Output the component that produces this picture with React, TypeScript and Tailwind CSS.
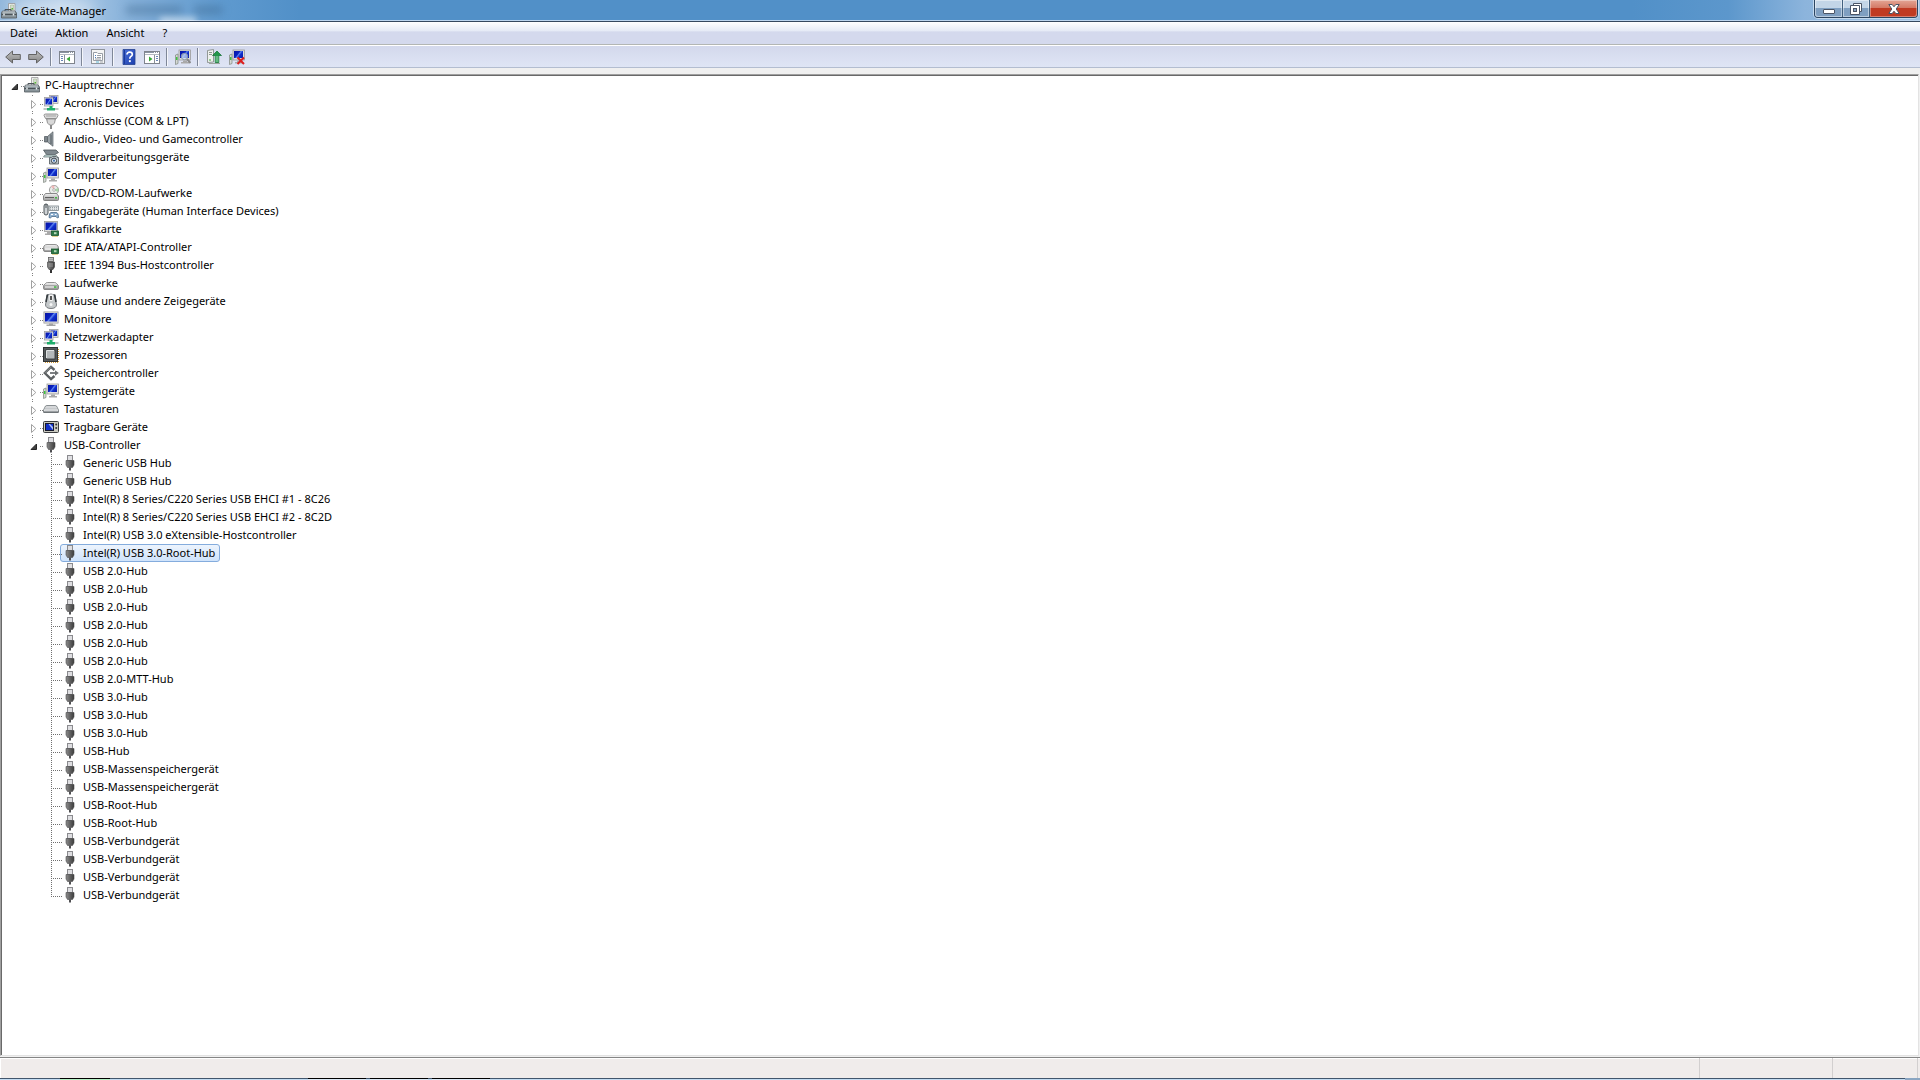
import { useState, type ReactNode } from "react";
import clsx from "clsx";

type IconName =
  | "root"
  | "network"
  | "port"
  | "audio"
  | "imaging"
  | "computer"
  | "dvd"
  | "hid"
  | "display"
  | "ide"
  | "firewire"
  | "drive"
  | "mouse"
  | "monitor"
  | "cpu"
  | "storage"
  | "keyboard"
  | "portable"
  | "usb";

interface Device {
  label: string;
  icon: IconName;
  children?: Device[];
}

const usb = (label: string): Device => ({ label, icon: "usb" });

const categories: Device[] = [
  { label: "Acronis Devices", icon: "network", children: [] },
  { label: "Anschlüsse (COM & LPT)", icon: "port", children: [] },
  { label: "Audio-, Video- und Gamecontroller", icon: "audio", children: [] },
  { label: "Bildverarbeitungsgeräte", icon: "imaging", children: [] },
  { label: "Computer", icon: "computer", children: [] },
  { label: "DVD/CD-ROM-Laufwerke", icon: "dvd", children: [] },
  { label: "Eingabegeräte (Human Interface Devices)", icon: "hid", children: [] },
  { label: "Grafikkarte", icon: "display", children: [] },
  { label: "IDE ATA/ATAPI-Controller", icon: "ide", children: [] },
  { label: "IEEE 1394 Bus-Hostcontroller", icon: "firewire", children: [] },
  { label: "Laufwerke", icon: "drive", children: [] },
  { label: "Mäuse und andere Zeigegeräte", icon: "mouse", children: [] },
  { label: "Monitore", icon: "monitor", children: [] },
  { label: "Netzwerkadapter", icon: "network", children: [] },
  { label: "Prozessoren", icon: "cpu", children: [] },
  { label: "Speichercontroller", icon: "storage", children: [] },
  { label: "Systemgeräte", icon: "computer", children: [] },
  { label: "Tastaturen", icon: "keyboard", children: [] },
  { label: "Tragbare Geräte", icon: "portable", children: [] },
  {
    label: "USB-Controller",
    icon: "usb",
    children: [
      usb("Generic USB Hub"),
      usb("Generic USB Hub"),
      usb("Intel(R) 8 Series/C220 Series USB EHCI #1 - 8C26"),
      usb("Intel(R) 8 Series/C220 Series USB EHCI #2 - 8C2D"),
      usb("Intel(R) USB 3.0 eXtensible-Hostcontroller"),
      usb("Intel(R) USB 3.0-Root-Hub"),
      usb("USB 2.0-Hub"),
      usb("USB 2.0-Hub"),
      usb("USB 2.0-Hub"),
      usb("USB 2.0-Hub"),
      usb("USB 2.0-Hub"),
      usb("USB 2.0-Hub"),
      usb("USB 2.0-MTT-Hub"),
      usb("USB 3.0-Hub"),
      usb("USB 3.0-Hub"),
      usb("USB 3.0-Hub"),
      usb("USB-Hub"),
      usb("USB-Massenspeichergerät"),
      usb("USB-Massenspeichergerät"),
      usb("USB-Root-Hub"),
      usb("USB-Root-Hub"),
      usb("USB-Verbundgerät"),
      usb("USB-Verbundgerät"),
      usb("USB-Verbundgerät"),
      usb("USB-Verbundgerät"),
    ],
  },
];

// gradients shared by all icons
function IconDefs() {
  return (
    <svg className="absolute size-0" aria-hidden="true">
      <defs>
        <linearGradient id="screen" x1="0" y1="0" x2="1" y2="0.6">
          <stop offset="0" stopColor="#0714a0" />
          <stop offset="0.5" stopColor="#0a22c4" />
          <stop offset="0.6" stopColor="#5f86ee" />
          <stop offset="0.75" stopColor="#1030d0" />
          <stop offset="1" stopColor="#0c22b4" />
        </linearGradient>
        <linearGradient id="metal" x1="0" y1="0" x2="0" y2="1">
          <stop offset="0" stopColor="#f4f4f4" />
          <stop offset="1" stopColor="#9a9a9a" />
        </linearGradient>
        <linearGradient id="plug" x1="0" y1="0" x2="1" y2="0">
          <stop offset="0" stopColor="#8d8d8d" />
          <stop offset="0.4" stopColor="#6a6a6a" />
          <stop offset="1" stopColor="#3c3c3c" />
        </linearGradient>
        <linearGradient id="arrow" x1="0" y1="0" x2="0" y2="1">
          <stop offset="0" stopColor="#bdbdbd" />
          <stop offset="1" stopColor="#868686" />
        </linearGradient>
        <linearGradient id="help" x1="0" y1="0" x2="1" y2="1">
          <stop offset="0" stopColor="#4a6fd8" />
          <stop offset="1" stopColor="#1c3fae" />
        </linearGradient>
      </defs>
    </svg>
  );
}

const pc = (
  <>
    <path d="M0.5 6 L3 5 V14.5 L0.5 15.5 Z" fill="#d5d9d5" stroke="#7d857d" strokeWidth="0.7" />
    <path d="M1 8 h1.5 v3 h-1.5 Z" fill="#3fc33f" />
    <rect x="4" y="1" width="11.5" height="10" fill="#dedede" stroke="#9b9b9b" strokeWidth="0.8" />
    <rect x="5" y="2" width="9" height="7" fill="url(#screen)" />
    <path d="M8 11.5 h4 v1.5 h2 v1.5 h-8 v-1.5 h2 Z" fill="#a9a9a9" />
  </>
);

const card = (
  <>
    <rect x="8.5" y="10" width="7" height="4.5" fill="#2f7a48" stroke="#15532a" strokeWidth="0.8" />
    <rect x="11" y="11.2" width="2.5" height="2" fill="#b8d8b8" />
    <path d="M9.5 15.5 h5" stroke="#c9a227" strokeDasharray="1 1" />
  </>
);

const icons: Record<IconName, ReactNode> = {
  root: (
    <>
      <path d="M7.5 0.5 H14 V9 H7.5 Z" fill="#efefef" stroke="#979797" strokeWidth="0.8" />
      <path d="M9.5 2 h3 v5 h-3 Z" fill="#d2dccb" stroke="#9ab088" strokeWidth="0.5" />
      <path d="M10.5 5 h1.5 v1.5 h-1.5 Z" fill="#58b53a" />
      <path d="M4 8 V6.5 H10 V8" fill="none" stroke="#4d5459" />
      <path d="M1.5 8 H14 L15.5 10 V15 H0.5 V10 Z" fill="#8a959b" stroke="#50585d" strokeWidth="0.8" />
      <path d="M1.5 9 H14" stroke="#d0d7db" />
      <path d="M0.5 11.5 H15.5" stroke="#4a5257" />
      <path d="M3 10.5 v2 M12.5 10.5 v2" stroke="#e8ecee" strokeWidth="1.5" />
    </>
  ),
  network: (
    <>
      <rect x="6.5" y="0.5" width="8.5" height="8" fill="#dedede" stroke="#a0a0a0" strokeWidth="0.8" />
      <rect x="7.5" y="1.5" width="6.5" height="5.5" fill="url(#screen)" />
      <rect x="1.5" y="2.5" width="8.5" height="8.5" fill="#e6e6e6" stroke="#a0a0a0" strokeWidth="0.8" />
      <rect x="2.5" y="3.5" width="6.5" height="6" fill="url(#screen)" />
      <path d="M0.5 14 H15.5" stroke="#a9b4b0" strokeWidth="1.5" />
      <path d="M6.5 11 h3 v2 h2.5 v2.5 h-8 v-2.5 h2.5 Z" fill="#1fae6b" />
    </>
  ),
  port: (
    <>
      <path d="M1 2.5 Q1 1 2.5 1 H13.5 Q15 1 15 2.5 L13.5 5.5 H2.5 Z" fill="#dcdcdc" stroke="#7f7f7f" strokeWidth="0.8" />
      <path d="M3.5 3 h9" stroke="#6b6b6b" strokeDasharray="1 1" />
      <path d="M3.5 6 H12.5 L11.5 10 L9.5 12 H6.5 L4.5 10 Z" fill="#c9c9c9" stroke="#858585" strokeWidth="0.8" />
      <path d="M6 6.5 v4 M8 6.5 v5 M10 6.5 v4" stroke="#f5f5f5" strokeWidth="0.7" />
      <path d="M8 12 V16" stroke="#8a8a8a" strokeWidth="2" />
    </>
  ),
  audio: (
    <>
      <path d="M1.5 5.5 H4.5 V11 H1.5 Z" fill="#7c858b" stroke="#4a5257" strokeWidth="0.7" />
      <path d="M4.5 5.5 L10 0.8 V15.2 L4.5 11 Z" fill="#9aa3a8" stroke="#5a6267" strokeWidth="0.8" />
      <path d="M8 3.5 V13" stroke="#4d555a" />
      <path d="M10.5 1 V15" stroke="#c5c9cc" />
    </>
  ),
  imaging: (
    <>
      <path d="M0.5 1 H13 L15.5 3.5 L12 5.5 H3.5 Z" fill="#7f898f" stroke="#4e575c" strokeWidth="0.8" />
      <path d="M2 6 H13 L14.5 8 H0.5 Z" fill="#c6dcd8" stroke="#6e7e80" strokeWidth="0.8" />
      <path d="M6.5 8.5 H8.5 L9.5 7.5 H13 L14 8.5 H15.5 V15 H6.5 Z" fill="#b9c2c7" stroke="#50585d" strokeWidth="0.8" />
      <circle cx="11" cy="11.7" r="2.6" fill="#e5eef5" stroke="#39434a" />
      <circle cx="11" cy="11.7" r="1.1" fill="#3d6ba8" />
    </>
  ),
  computer: pc,
  dvd: (
    <>
      <circle cx="11" cy="5" r="4.6" fill="#e9ece9" stroke="#8c8c8c" strokeWidth="0.8" />
      <path d="M11 5 L8 1.5 A4.6 4.6 0 0 1 11.5 0.5 Z" fill="#f0b8b8" />
      <path d="M11 5 L15 3 A4.6 4.6 0 0 1 15 7 Z" fill="#a8d7a8" />
      <circle cx="11" cy="5" r="1.3" fill="#fff" stroke="#888" strokeWidth="0.6" />
      <path d="M2.5 8.5 H13.5 L15.5 11 V14.5 Q15.5 15.5 14.5 15.5 H1.5 Q0.5 15.5 0.5 14.5 V11 Z" fill="url(#metal)" stroke="#6f6f6f" strokeWidth="0.8" />
      <path d="M2 12.5 H11" stroke="#5f5f5f" />
      <rect x="12" y="12" width="2" height="1.5" fill="#43b843" />
    </>
  ),
  hid: (
    <>
      <path d="M1 3 Q1 1 3 1 Q5 1 5 3 V10 Q5 12 3 12 Q1 12 1 10 Z" fill="#cfd3d6" stroke="#4d5459" />
      <path d="M3 1 V5" stroke="#4d5459" />
      <rect x="6" y="3" width="9.5" height="4.5" fill="#e3e6e8" stroke="#7c858a" strokeWidth="0.8" />
      <path d="M7 4.5 h8 M7 6.2 h8" stroke="#8b9499" strokeWidth="0.9" strokeDasharray="1 1" />
      <path d="M6 14.5 Q6 9.5 8 9.5 H13 Q15.5 9.5 15.5 14.5 Q14.5 16 13 13.5 H9 Q7 16 6 14.5 Z" fill="#8fb0cf" stroke="#4a6a88" strokeWidth="0.8" />
      <path d="M8 11.5 h2 M12 11.5 h1.5" stroke="#fff" />
    </>
  ),
  display: (
    <>
      <rect x="1.5" y="0.5" width="13" height="10" fill="#dedede" stroke="#9b9b9b" strokeWidth="0.8" />
      <rect x="2.5" y="1.5" width="11" height="7.5" fill="url(#screen)" />
      <path d="M4 11 h4 v3 h-6 v-1.5 h2 Z" fill="#a9a9a9" />
      {card}
    </>
  ),
  ide: (
    <>
      <path d="M1 7 Q2 5.5 4 5.5 H12 Q14 5.5 15 7 L15.5 9 V11 Q15.5 12.5 14 12.5 H2 Q0.5 12.5 0.5 11 V9 Z" fill="url(#metal)" stroke="#777" strokeWidth="0.8" />
      <path d="M2 8.5 H14 V11 H2 Z" fill="#e4e4e4" />
      {card}
    </>
  ),
  firewire: (
    <>
      <rect x="5.5" y="0.5" width="5" height="4" fill="#d8d8d8" stroke="#5c5c5c" strokeWidth="0.8" />
      <path d="M7 1.5 v2 M9 1.5 v2" stroke="#555" strokeWidth="0.8" />
      <path d="M4.5 5 H11.5 V10 L10 12.5 H6 L4.5 10 Z" fill="url(#plug)" stroke="#3a3a3a" strokeWidth="0.6" />
      <path d="M6 7 h4 M6 9 h4" stroke="#b5b5b5" strokeWidth="0.7" />
      <path d="M8 12.5 V16" stroke="#333" strokeWidth="2" />
    </>
  ),
  drive: (
    <>
      <path d="M2.5 8.5 Q3 7.5 4.5 7.5 H11.5 Q13 7.5 13.5 8.5 L15.5 10.5 V13.5 Q15.5 14.5 14 14.5 H2 Q0.5 14.5 0.5 13.5 V10.5 Z" fill="url(#metal)" stroke="#777" strokeWidth="0.8" />
      <path d="M1.5 10.5 H14.5 V13.5 H1.5 Z" fill="#d0d0d0" stroke="#8a8a8a" strokeWidth="0.6" />
      <rect x="11" y="11.3" width="2.5" height="1.5" fill="#3db83d" />
    </>
  ),
  mouse: (
    <>
      <path d="M4 2 Q8 0 12 2 L13.5 12 Q13 15.5 8 15.5 Q3 15.5 2.5 12 Z" fill="#c4c8ca" stroke="#5a6064" strokeWidth="0.8" />
      <path d="M4.5 1.5 L3 9 M11.5 1.5 L13 9" stroke="#343a3e" strokeWidth="1.6" />
      <path d="M6 1.5 H10 L9.5 8 H6.5 Z" fill="#f3f3f3" />
      <path d="M8 3 V7" stroke="#222" strokeWidth="1.5" />
      <circle cx="8" cy="11.5" r="1.5" fill="#f6f6f6" />
    </>
  ),
  monitor: (
    <>
      <rect x="0.9" y="0.9" width="14.2" height="11.2" fill="#dedede" stroke="#9b9b9b" strokeWidth="0.8" />
      <rect x="2" y="2" width="12" height="8.5" fill="url(#screen)" />
      <path d="M6 12.5 h4 v1 h2.5 v1.5 h-9 v-1.5 h2.5 Z" fill="#a3a3a3" />
    </>
  ),
  cpu: (
    <>
      <path d="M2 15.5 H15 M15.5 2 V15" stroke="#d39a35" strokeDasharray="1 1" />
      <rect x="0.5" y="0.5" width="14" height="14" fill="#55595b" stroke="#303335" />
      <rect x="3" y="3" width="9" height="9" fill="#b4b8ba" stroke="#2c2f31" strokeWidth="0.8" />
      <path d="M3.5 11 V3.5 H11" fill="none" stroke="#dfe2e3" />
    </>
  ),
  storage: (
    <>
      <path d="M11.5 5 L8 1.8 L1.8 8 L8 14.2 L11.5 11" fill="none" stroke="#5c6062" strokeWidth="2.4" />
      <path d="M8 1.8 L1.8 8" stroke="#8f9395" strokeWidth="0.8" />
      <path d="M7 8 H13.5" stroke="#5c6062" strokeWidth="1.6" />
      <path d="M12 5.2 L15.8 8 L12 10.8 Z" fill="#6b6f71" />
    </>
  ),
  keyboard: (
    <>
      <path d="M2.5 5 Q3 4.5 4 4.5 H12 Q13 4.5 13.5 5 L15.5 9 V11 Q15.5 11.5 15 11.5 H1 Q0.5 11.5 0.5 11 V9 Z" fill="#e4e6e7" stroke="#6d7377" strokeWidth="0.8" />
      <path d="M3.5 6 H13 M2.5 7.5 H14 M2.5 9 H14" stroke="#a0a6aa" strokeWidth="0.9" strokeDasharray="1 1" />
      <path d="M0.5 11 H15.5" stroke="#555b5f" />
    </>
  ),
  portable: (
    <>
      <rect x="0.5" y="2.5" width="15" height="11" rx="1" fill="#c9c9bf" stroke="#3a3c3e" />
      <rect x="2" y="4" width="9" height="8" fill="#16182a" />
      <rect x="3" y="5" width="7" height="6" fill="#1230c8" />
      <path d="M7 5 L10 8 V11 L5.5 5 Z" fill="#a9c0fa" />
      <circle cx="13.2" cy="5.5" r="1" fill="#333" />
      <circle cx="13.2" cy="9" r="1" fill="#333" />
    </>
  ),
  usb: (
    <>
      <rect x="5.5" y="0.5" width="5" height="5" fill="#dfdfe2" stroke="#8a8a8e" />
      <path d="M4 5.5 H12 V10 L10.5 12.5 H5.5 L4 10 Z" fill="url(#plug)" stroke="#4a4a4c" strokeWidth="0.6" />
      <path d="M7 12.5 H9 V15.5 H7 Z" fill="#4f4f52" />
    </>
  ),
};

function Icon({ children }: { children: ReactNode }) {
  return (
    <svg viewBox="0 0 16 16" className="size-4 shrink-0" aria-hidden="true">
      {children}
    </svg>
  );
}

interface ItemProps {
  device: Device;
  level: number;
  last?: boolean;
  open?: boolean;
  selected?: boolean;
  onToggle?: () => void;
  onSelect?: () => void;
  children?: ReactNode;
}

function TreeItem({ device, level, last, open, selected, onToggle, onSelect, children }: ItemProps) {
  const leaf = !device.children;

  return (
    <li role="treeitem" aria-expanded={leaf ? undefined : !!open} aria-selected={!!selected}>
      <div className="flex h-[18px] items-center">
        {leaf ? (
          <svg viewBox="0 0 15 18" className="z-10 -mr-[2px] h-[18px] w-[15px] shrink-0" aria-hidden="true">
            <path d={last ? "M4.5 0 V11" : "M4.5 0 V18"} stroke="#707070" strokeDasharray="1 1" />
            <path d="M4 10.5 H15" stroke="#707070" strokeDasharray="1 1" />
          </svg>
        ) : (
          <button
            type="button"
            aria-label={`${device.label} ${open ? "reduzieren" : "erweitern"}`}
            onClick={onToggle}
            className="z-10 -mr-[2px] shrink-0"
          >
            <svg viewBox="0 0 15 18" className="h-[18px] w-[15px]">
              {level > 0 && <path d="M4.5 1 V5" stroke="#808080" strokeDasharray="1 3" />}
              {level > 0 && !last && <path d="M4.5 17 V18" stroke="#808080" />}
              <path d="M12 10.5 H15" stroke="#808080" strokeDasharray="1 1" />
              {open ? (
                <path d="M8.5 8 V13.5 H3 Z" fill="#404040" stroke="#262626" />
              ) : (
                <path d="M3.5 6.5 L7.8 10.5 L3.5 14.5 Z" fill="#fff" stroke="#a0a0a0" />
              )}
            </svg>
          </button>
        )}
        <button
          type="button"
          onClick={onSelect}
          className={clsx(
            "flex h-[18px] items-center gap-[5px] rounded-[3px] border pr-1 pl-px whitespace-nowrap",
            selected ? "border-[#84acdd] bg-linear-to-b from-[#edf4fd] to-[#cfe3fb]" : "border-transparent",
          )}
        >
          <Icon>{icons[device.icon]}</Icon>
          <span>{device.label}</span>
        </button>
      </div>
      {children}
    </li>
  );
}

function DeviceTree() {
  const [rootOpen, setRootOpen] = useState(true);
  const [open, setOpen] = useState<string[]>(["USB-Controller"]);
  const [selected, setSelected] = useState("19-5");

  const toggle = (label: string) =>
    setOpen((prev) => (prev.includes(label) ? prev.filter((l) => l !== label) : [...prev, label]));

  const root: Device = { label: "PC-Hauptrechner", icon: "root", children: categories };

  return (
    <ul role="tree" aria-label="Geräte" className="pl-[7px]">
      <TreeItem
        device={root}
        level={0}
        open={rootOpen}
        selected={selected === "root"}
        onToggle={() => setRootOpen(!rootOpen)}
        onSelect={() => setSelected("root")}
      >
        {rootOpen && (
          <ul role="group" className="pl-[19px]">
            {categories.map((cat, i) => {
              const isOpen = open.includes(cat.label);
              return (
                <TreeItem
                  key={cat.label}
                  device={cat}
                  level={1}
                  last={i === categories.length - 1}
                  open={isOpen}
                  selected={selected === `${i}`}
                  onToggle={() => toggle(cat.label)}
                  onSelect={() => setSelected(`${i}`)}
                >
                  {isOpen && (
                    <ul role="group" className="pl-[19px]">
                      {cat.children?.map((dev, j) => (
                        <TreeItem
                          key={j}
                          device={dev}
                          level={2}
                          last={j === cat.children!.length - 1}
                          selected={selected === `${i}-${j}`}
                          onSelect={() => setSelected(`${i}-${j}`)}
                        />
                      ))}
                    </ul>
                  )}
                </TreeItem>
              );
            })}
          </ul>
        )}
      </TreeItem>
    </ul>
  );
}

function TitleBar() {
  return (
    <header className="relative flex h-[22px] items-start justify-between overflow-hidden border-b border-[#36495f] bg-[#5190c8] bg-[linear-gradient(90deg,#93b8dc_0px,#b4cee8_60px,#86b1da_130px,#5f9acf_220px,#5190c8_300px,#5190c8_85%,#5c97cc_90%,#8cb4dc_94%,#9fc0e2_100%)] shadow-[inset_0_-1px_0_#bcd5ee]">
      {/* window behind the glass */}
      <div className="absolute top-1.5 left-[126px] flex gap-3 blur-[4px]" aria-hidden="true">
        <span className="h-2 w-14 bg-[#33597f]/40" />
        <span className="h-2 w-7 bg-[#33597f]/40" />
      </div>
      <div className="absolute -bottom-1 left-40 h-2 w-9 bg-white/50 blur-[3px]" aria-hidden="true" />

      <div className="relative flex h-[21px] items-center gap-1 pl-px">
        <span className="absolute inset-x-3 inset-y-1 rounded-full bg-white/60 blur-sm" />
        <span className="relative">
          <Icon>{icons.root}</Icon>
        </span>
        <h1 className="relative">Geräte-Manager</h1>
      </div>

      <div className="relative mr-0.5 flex h-[18px] rounded-b-[4px] border border-t-0 border-[#2c4561] shadow-[0_0_0_1px_#c3d9ee]">
        <button
          type="button"
          aria-label="Minimieren"
          className="flex w-7 items-center justify-center rounded-bl-[3px] border-r border-[#41607f] bg-linear-to-b from-[#c3d5e7] from-45% to-[#7f9fc1] to-50% shadow-[inset_0_0_0_1px_rgba(255,255,255,0.45)]"
        >
          <svg viewBox="0 0 12 12" className="size-3">
            <rect x="0.5" y="6.5" width="11" height="4" rx="0.5" fill="#fff" stroke="#4b5566" />
          </svg>
        </button>
        <button
          type="button"
          aria-label="Verkleinern"
          className="flex w-[27px] items-center justify-center border-r border-[#41607f] bg-linear-to-b from-[#c3d5e7] from-45% to-[#7f9fc1] to-50% shadow-[inset_0_0_0_1px_rgba(255,255,255,0.45)]"
        >
          <svg viewBox="0 0 12 12" className="size-3">
            <path d="M3.5 0.5 H11.5 V8.5 H3.5 Z" fill="#fff" stroke="#4b5566" />
            <path d="M0.5 2.5 H9.5 V11.5 H0.5 Z" fill="#fff" stroke="#4b5566" />
            <rect x="3.5" y="5.5" width="3" height="3" fill="#8aa5c4" stroke="#4b5566" />
          </svg>
        </button>
        <button
          type="button"
          aria-label="Schließen"
          className="flex w-[47px] items-center justify-center rounded-br-[3px] bg-linear-to-b from-[#e3a595] from-0% via-[#d47a66] via-45% to-[#c03a22] to-50% shadow-[inset_0_0_0_1px_rgba(255,255,255,0.35)]"
        >
          <svg viewBox="0 0 12 12" className="size-3">
            <path
              d="M0.8 1.5 H4.2 L6 3.8 L7.8 1.5 H11.2 L8.2 6 L11.2 10.5 H7.8 L6 8.2 L4.2 10.5 H0.8 L3.8 6 Z"
              fill="#fff"
              stroke="#4b5566"
            />
          </svg>
        </button>
      </div>
    </header>
  );
}

function MenuBar() {
  return (
    <nav className="flex h-[23px] items-center border-b border-[#b3b6b4] bg-linear-to-b from-white from-0% via-[#e6ebf6] via-40% to-[#d4d9ed] to-45% pl-px">
      {["Datei", "Aktion", "Ansicht", "?"].map((item) => (
        <button key={item} type="button" className="px-[9px]">
          {item}
        </button>
      ))}
    </nav>
  );
}

const paneFrame = (
  <>
    <rect x="0.5" y="2.5" width="15" height="12" fill="#fff" stroke="#7f848d" />
    <path d="M1 3.5 H15" stroke="#8a93a3" />
    <path d="M1 5.5 H15" stroke="#b4b9c2" />
    <path d="M10 3.5 h1 M12 3.5 h1 M14 3.5 h1" stroke="#fff" />
  </>
);

const tools: (null | { label: string; icon: ReactNode })[] = [
  {
    label: "Zurück",
    icon: <path d="M0.7 8 L7.5 2 V5.5 H15.3 V10.5 H7.5 V14 Z" fill="url(#arrow)" stroke="#636363" />,
  },
  {
    label: "Vorwärts",
    icon: <path d="M15.3 8 L8.5 2 V5.5 H0.7 V10.5 H8.5 V14 Z" fill="url(#arrow)" stroke="#636363" />,
  },
  null,
  {
    label: "Konsolenstruktur ein-/ausblenden",
    icon: (
      <>
        {paneFrame}
        <path d="M5.5 6 V14" stroke="#8a8f98" />
        <path d="M2 7.5 h2 M2 9.5 h2 M2 11.5 h2" stroke="#6b86b8" />
        <path d="M11 7.5 V12.5 L7.5 10 Z" fill="#36a836" />
      </>
    ),
  },
  null,
  {
    label: "Eigenschaften",
    icon: (
      <>
        <rect x="1.5" y="0.5" width="13" height="14" fill="#f4f4f4" stroke="#8f949b" />
        <path d="M3.5 3.5 H7 L8 4.5 H12.5 V11.5 H3.5 Z" fill="#fff" stroke="#999ea6" />
        <path d="M5 6.5 h1 M5 8.5 h1" stroke="#4a7fc0" />
        <path d="M7 6.5 h4 M7 8.5 h4 M5 10 h6" stroke="#9a9fa6" />
        <path d="M6 13 h3" stroke="#5cb8d8" />
        <path d="M10 13 h3" stroke="#a5a9af" />
      </>
    ),
  },
  null,
  {
    label: "Hilfe",
    icon: (
      <>
        <path d="M2 0.5 H14 V15.5 H2 Z" fill="url(#help)" stroke="#24418f" strokeWidth="0.8" />
        <path d="M3.5 1 V15" stroke="#1b3a9a" />
        <path d="M6 5.5 Q6 3.2 8.7 3.2 Q11.3 3.2 11.3 5.4 Q11.3 6.7 9.8 7.5 Q8.8 8.1 8.8 9.8" fill="none" stroke="#fff" strokeWidth="1.7" />
        <rect x="7.9" y="11.2" width="1.9" height="1.9" fill="#fff" />
      </>
    ),
  },
  {
    label: "Aktionsbereich ein-/ausblenden",
    icon: (
      <>
        {paneFrame}
        <path d="M10.5 6 V14" stroke="#8a8f98" />
        <path d="M12 7.5 h2 M12 9.5 h2 M12 11.5 h2" stroke="#6b86b8" />
        <path d="M5 7.5 V12.5 L8.5 10 Z" fill="#36a836" />
      </>
    ),
  },
  null,
  {
    label: "Nach geänderter Hardware suchen",
    icon: (
      <>
        {pc}
        <circle cx="9.5" cy="7.5" r="3.2" fill="#cfe2f5" fillOpacity="0.7" stroke="#8d98a5" />
        <path d="M12 10 L15.5 14" stroke="#8a8a8a" strokeWidth="2" />
      </>
    ),
  },
  null,
  {
    label: "Treibersoftware aktualisieren",
    icon: (
      <>
        <path d="M1.5 1.5 L7.5 0.5 V13 L1.5 13.5 Z" fill="#eef0ee" stroke="#7d8580" strokeWidth="0.8" />
        <path d="M3 3.5 h3 M3 5.5 h3" stroke="#8c948f" />
        <path d="M3 11 h2" stroke="#3bb53b" />
        <path d="M3 14.5 H14" stroke="#9da39f" />
        <path d="M11 2 L15.5 6.5 H12.8 V13.5 H9.2 V6.5 H6.5 Z" fill="#22964a" stroke="#0e6e2e" strokeWidth="0.7" />
        <path d="M9.5 8 h3 M9.5 10 h3 M9.5 12 h3" stroke="#b6e6c4" strokeWidth="0.9" />
      </>
    ),
  },
  {
    label: "Deinstallieren",
    icon: (
      <>
        {pc}
        <path d="M8.5 8.5 L15 15 M15 8.5 L8.5 15" stroke="#dd1f1f" strokeWidth="2" />
      </>
    ),
  },
];

function Toolbar() {
  return (
    <div role="toolbar" aria-label="Symbolleiste" className="flex h-[23px] items-center border-t border-b border-t-white border-b-[#b3bdd0] bg-linear-to-b from-[#d3d8ec] to-[#dfe5f5] pl-px">
      {tools.map((tool, i) =>
        tool ? (
          <button key={i} type="button" aria-label={tool.label} className="flex w-[23px] justify-center">
            <Icon>{tool.icon}</Icon>
          </button>
        ) : (
          <span key={i} className="mx-[3px] h-[18px] w-0.5 border-r border-l border-l-[#7f8798] border-r-white/70" />
        ),
      )}
    </div>
  );
}

// thin strip of the taskbar that shows under the window
function TaskbarEdge() {
  return (
    <div className="flex h-0.5 border-t border-[#42566c] bg-[#c3dcf2]" aria-hidden="true">
      <span className="-mt-px ml-[60px] h-0.5 w-[50px] border-t border-black bg-[#b5f0c4]" />
      <span className="-mt-px ml-[198px] h-0.5 w-[58px] border-t border-black bg-[#dce9f5]" />
      <span className="-mt-px ml-1 h-0.5 w-[58px] border-t border-black bg-[#dce9f5]" />
      <span className="-mt-px ml-1 h-0.5 w-[58px] border-t border-black bg-[#dce9f5]" />
      <span className="-mt-px ml-auto h-0.5 w-[15px] bg-[#8ba6c2]" />
    </div>
  );
}

export default function App() {
  return (
    <div className="flex min-h-screen flex-col bg-[#f0f0f0] font-['Noto_Sans','Open_Sans',sans-serif] text-[11px] leading-4 text-black">
      <IconDefs />
      <TitleBar />
      <MenuBar />
      <Toolbar />
      <main className="mt-1.5 mr-px flex flex-1 flex-col border-t border-l border-r border-b border-[#a0a0a0] border-r-[#e3e3e3] border-b-[#e3e3e3]">
        <div className="flex-1 border-t border-l border-[#696969] bg-white">
          <DeviceTree />
        </div>
      </main>
      <footer className="mt-px flex h-[21px] border-t border-[#858585] bg-[#f0eceb] shadow-[inset_1px_1px_0_white]">
        <span className="flex-1 border-r border-[#d2cfcf]" />
        <span className="w-[133px] border-r border-[#d2cfcf]" />
        <span className="mr-0.5 w-[85px] border-r border-[#d2cfcf]" />
      </footer>
      <TaskbarEdge />
    </div>
  );
}
